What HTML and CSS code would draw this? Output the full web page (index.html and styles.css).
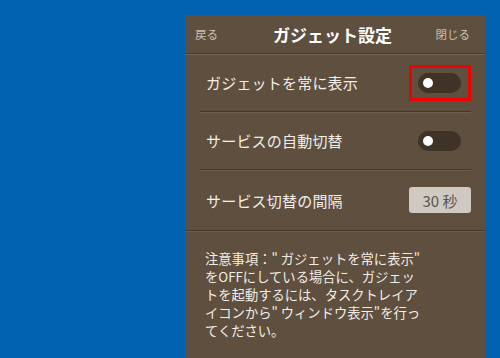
FILE: index.html
```html
<!DOCTYPE html>
<html lang="ja">

<head>
	<meta name="viewport" content="width=device-width, initial-scale=1" />
	<title>ガジェット設定</title>
	<link rel="stylesheet" href="styles.css">
</head>

<body>
	<div class="panel">
		<div class="head">
			<span class="nav">戻る</span>
			<span class="title">ガジェット設定</span>
			<span class="nav">閉じる</span>
		</div>
		<div class="row">
			<span class="label">ガジェットを常に表示</span>
			<span class="mark"><span class="toggle"><span class="knob"></span></span></span>
		</div>
		<div class="row">
			<span class="label">サービスの自動切替</span>
			<span class="toggle"><span class="knob"></span></span>
		</div>
		<div class="row last">
			<span class="label">サービス切替の間隔</span>
			<button class="val">30 秒</button>
		</div>
		<p class="note">注意事項：" ガジェットを常に表示"<br />をOFFにしている場合に、ガジェッ<br />トを起動するには、タスクトレイア<br />イコンから" ウィンドウ表示"を行っ<br />てください。</p>
	</div>
</body>

</html>
```

FILE: styles.css
```css
body {
	margin:0;
	height:358px;
	overflow:hidden;
	background-color:#0062b0;
	font-family:"Noto Sans CJK JP", "Noto Sans", sans-serif;
	color:#f2eee8;
}

.panel {
	margin:15px 0 0 185px;
	width:300px;
	height:343px;
	background-color:#5e4f3f;
}

.head {
	display:flex;
	align-items:center;
	justify-content:space-between;
	height:38px;
	padding:0 15px 0 10px;
	border-bottom:1px solid #43372b;
	box-shadow:0 1px 0 #7a6b59;
}

.nav {
	font-size:11.5px;
	color:#c9c0b4;
	width:40px;
}

.nav:last-child {
	text-align:right;
}

.title {
	font-size:17px;
	font-weight:bold;
	color:#fff;
}

.row {
	display:flex;
	align-items:center;
	justify-content:space-between;
	height:57px;
	margin:0 14px 0 15px;
	padding-left:6px;
	border-bottom:1px solid #43372b;
	box-shadow:0 1px 0 #705f4d;
}

.row.last {
	margin:0;
	padding:0 14px 0 21px;
	height:60px;
}

.label {
	font-size:15px;
	letter-spacing:0.2px;
}

.toggle {
	display:flex;
	align-items:center;
	width:43px;
	height:20px;
	margin-right:10px;
	border-radius:10px;
	background-color:#3f3327;
}

.knob {
	width:10px;
	height:10px;
	margin-left:5px;
	border-radius:50%;
	background-color:#fff;
}

.mark {
	padding:5px 7px 5px 6px;
	border:3px solid #ee0000;
}

.mark .toggle {
	margin:0;
}

.val {
	width:62px;
	height:26px;
	border:0;
	border-radius:3px;
	background-color:#cfc9c2;
	color:#5a544e;
	font-family:inherit;
	font-size:15px;
	padding:0;
}

.note {
	margin:19px 0 0 20px;
	font-size:13.3px;
	line-height:18px;
	white-space:nowrap;
}
```
